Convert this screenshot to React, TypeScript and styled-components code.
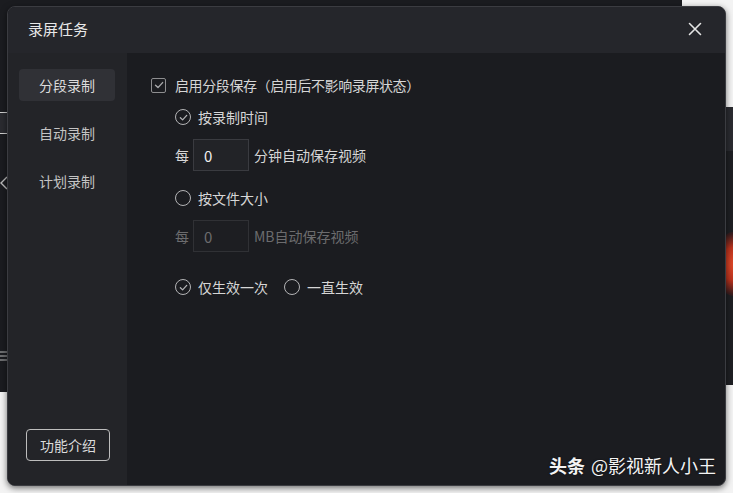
import React from "react";
import styled, { createGlobalStyle } from "styled-components";

const Global = createGlobalStyle`
  html, body { margin: 0; padding: 0; background: #f3f3f3; }
  body { font-family: "Noto Sans CJK SC", "Noto Sans", sans-serif; }
  * { box-sizing: border-box; }
`;

const Page = styled.div`
  position: relative;
  width: 733px;
  height: 493px;
  overflow: hidden;
  background: #f3f3f3;
`;

/* windows of the desktop behind the dialog */
const BackWindow = styled.div<{ $x: number; $y: number; $w: number; $h: number; $bg: string }>`
  position: absolute;
  left: ${(p) => p.$x}px;
  top: ${(p) => p.$y}px;
  width: ${(p) => p.$w}px;
  height: ${(p) => p.$h}px;
  background: ${(p) => p.$bg};
`;

const BackBar = styled.div`
  position: absolute;
  left: 0;
  top: 112px;
  width: 10px;
  height: 22px;
  background: #2a2b30;
  border-top: 1px solid #cfcfcf;
  border-bottom: 1px solid #cfcfcf;
`;

const BackIcon = styled.svg<{ $y: number }>`
  position: absolute;
  left: 0;
  top: ${(p) => p.$y}px;
`;

const RedGlow = styled.div`
  position: absolute;
  left: 716px;
  top: 232px;
  width: 34px;
  height: 64px;
  border-radius: 50%;
  background: radial-gradient(circle at 60% 50%, #e24a2a 0%, #b8321d 45%, #3a1d1e 80%, transparent 100%);
`;

const Dialog = styled.div`
  position: absolute;
  left: 7px;
  top: 6px;
  width: 719px;
  height: 480px;
  border-radius: 8px;
  border: 1px solid #3b3c41;
  background: #1b1c20;
  box-shadow: 0 2px 6px rgba(0, 0, 0, 0.55);
  display: flex;
  flex-direction: column;
  overflow: hidden;
`;

const Header = styled.div`
  height: 46px;
  flex: none;
  background: #25262b;
  display: flex;
  align-items: center;
  justify-content: space-between;
  padding: 0 22px 2px 20px;
`;

const Title = styled.div`
  color: #e8e8e8;
  font-size: 15px;
  line-height: 20px;
`;

const CloseButton = styled.div`
  width: 16px;
  height: 16px;
  display: flex;
  align-items: center;
  justify-content: center;
`;

const Body = styled.div`
  flex: 1;
  display: flex;
  min-height: 0;
`;

const Sidebar = styled.div`
  width: 119px;
  flex: none;
  background: #232428;
  display: flex;
  flex-direction: column;
  padding: 16px 0 24px 11px;
`;

const NavList = styled.div`
  display: flex;
  flex-direction: column;
  gap: 16px;
  flex: 1;
`;

const NavItem = styled.div<{ $active?: boolean }>`
  width: 96px;
  height: 32px;
  border-radius: 4px;
  background: ${(p) => (p.$active ? "#303136" : "transparent")};
  color: ${(p) => (p.$active ? "#dcdcdc" : "#c4c4c4")};
  font-size: 14px;
  display: flex;
  align-items: center;
  justify-content: center;
`;

const IntroButton = styled.div`
  margin-left: 7px;
  width: 84px;
  height: 32px;
  border: 1px solid #bdbdbd;
  border-radius: 4px;
  color: #dcdcdc;
  font-size: 14px;
  display: flex;
  align-items: center;
  justify-content: center;
`;

const Main = styled.div`
  flex: 1;
  position: relative;
  display: flex;
  flex-direction: column;
  padding: 22px 0 0 24px;
`;

const Row = styled.div<{ $indent?: boolean; $gap?: number; $h?: number }>`
  display: flex;
  align-items: center;
  height: ${(p) => p.$h ?? 20}px;
  margin-top: ${(p) => p.$gap ?? 0}px;
  padding-left: ${(p) => (p.$indent ? 24 : 0)}px;
`;

const Label = styled.span<{ $disabled?: boolean; $tight?: boolean }>`
  color: ${(p) => (p.$disabled ? "#6c6c6e" : "#d6d6d6")};
  font-size: 14px;
  letter-spacing: ${(p) => (p.$tight ? "-0.4px" : "0")};
  line-height: 20px;
  white-space: nowrap;
`;

const Option = styled.div<{ $space?: number }>`
  display: flex;
  align-items: center;
  gap: 7px;
  margin-right: ${(p) => p.$space ?? 0}px;
`;

const Box = styled.div`
  width: 15px;
  height: 15px;
  border: 1.5px solid #8e8e90;
  border-radius: 2px;
  margin-right: 9px;
  display: flex;
  align-items: center;
  justify-content: center;
`;

const Circle = styled.div`
  width: 16px;
  height: 16px;
  border: 1.4px solid #b4b4b6;
  border-radius: 50%;
  display: flex;
  align-items: center;
  justify-content: center;
`;

const NumberBox = styled.div<{ $disabled?: boolean }>`
  width: 56px;
  height: 32px;
  margin: 0 5px 0 4px;
  border: 1px solid ${(p) => (p.$disabled ? "#303135" : "#3a3b40")};
  background: ${(p) => (p.$disabled ? "#1d1e22" : "#222327")};
  color: ${(p) => (p.$disabled ? "#6c6c6e" : "#f0f0f0")};
  font-size: 15px;
  display: flex;
  align-items: center;
  padding-left: 10px;
`;

const Watermark = styled.div`
  position: absolute;
  right: 9px;
  bottom: 9px;
  color: #f4f4f4;
  font-size: 18px;
  line-height: 22px;
  white-space: nowrap;
  text-shadow: 0 0 2px rgba(0, 0, 0, 0.6);
  b { font-weight: 700; margin-right: 6px; }
`;

const Check = ({ size = 9, color = "#b4b4b6" }: { size?: number; color?: string }) => (
  <svg width={size} height={size} viewBox="0 0 10 10">
    <path d="M1.5 5.2 L4 7.6 L8.6 2.6" fill="none" stroke={color} strokeWidth="1.4" strokeLinecap="round" strokeLinejoin="round" />
  </svg>
);

const Radio = ({ checked, label, space }: { checked?: boolean; label: string; space?: number }) => (
  <Option $space={space}>
    <Circle>{checked && <Check size={9} />}</Circle>
    <Label>{label}</Label>
  </Option>
);

export default function App() {
  return (
    <Page>
      <Global />
      <BackWindow $x={0} $y={0} $w={682} $h={392} $bg="#1b1c20" />
      <BackWindow $x={682} $y={107} $w={51} $h={278} $bg="#1e1f23" />
      <BackWindow $x={682} $y={107} $w={51} $h={44} $bg="#2a2b30" />
      <BackBar />
      <BackIcon $y={176} width="8" height="14" viewBox="0 0 8 14">
        <path d="M7 1 L1 7 L7 13" fill="none" stroke="#bdbdbd" strokeWidth="1.4" />
      </BackIcon>
      <BackIcon $y={350} width="8" height="12" viewBox="0 0 8 12">
        <path d="M0 2 H8 M0 6 H8 M0 10 H8" stroke="#bdbdbd" strokeWidth="1.2" />
      </BackIcon>
      <RedGlow />
      <Dialog>
        <Header>
          <Title>录屏任务</Title>
          <CloseButton>
            <svg width="14" height="14" viewBox="0 0 14 14">
              <path d="M1.5 1.5 L12.5 12.5 M12.5 1.5 L1.5 12.5" stroke="#e4e4e4" strokeWidth="1.6" strokeLinecap="round" />
            </svg>
          </CloseButton>
        </Header>
        <Body>
          <Sidebar>
            <NavList>
              <NavItem $active>分段录制</NavItem>
              <NavItem>自动录制</NavItem>
              <NavItem>计划录制</NavItem>
            </NavList>
            <IntroButton>功能介绍</IntroButton>
          </Sidebar>
          <Main>
            <Row>
              <Box>
                <Check size={10} color="#a8a8aa" />
              </Box>
              <Label $tight>启用分段保存（启用后不影响录屏状态）</Label>
            </Row>
            <Row $indent $gap={12}>
              <Radio checked label="按录制时间" />
            </Row>
            <Row $indent $gap={12} $h={32}>
              <Label>每</Label>
              <NumberBox>0</NumberBox>
              <Label>分钟自动保存视频</Label>
            </Row>
            <Row $indent $gap={17}>
              <Radio label="按文件大小" />
            </Row>
            <Row $indent $gap={12} $h={32}>
              <Label $disabled>每</Label>
              <NumberBox $disabled>0</NumberBox>
              <Label $disabled>MB自动保存视频</Label>
            </Row>
            <Row $indent $gap={25}>
              <Radio checked label="仅生效一次" space={16} />
              <Radio label="一直生效" />
            </Row>
            <Watermark>
              <b>头条</b>@影视新人小王
            </Watermark>
          </Main>
        </Body>
      </Dialog>
    </Page>
  );
}
